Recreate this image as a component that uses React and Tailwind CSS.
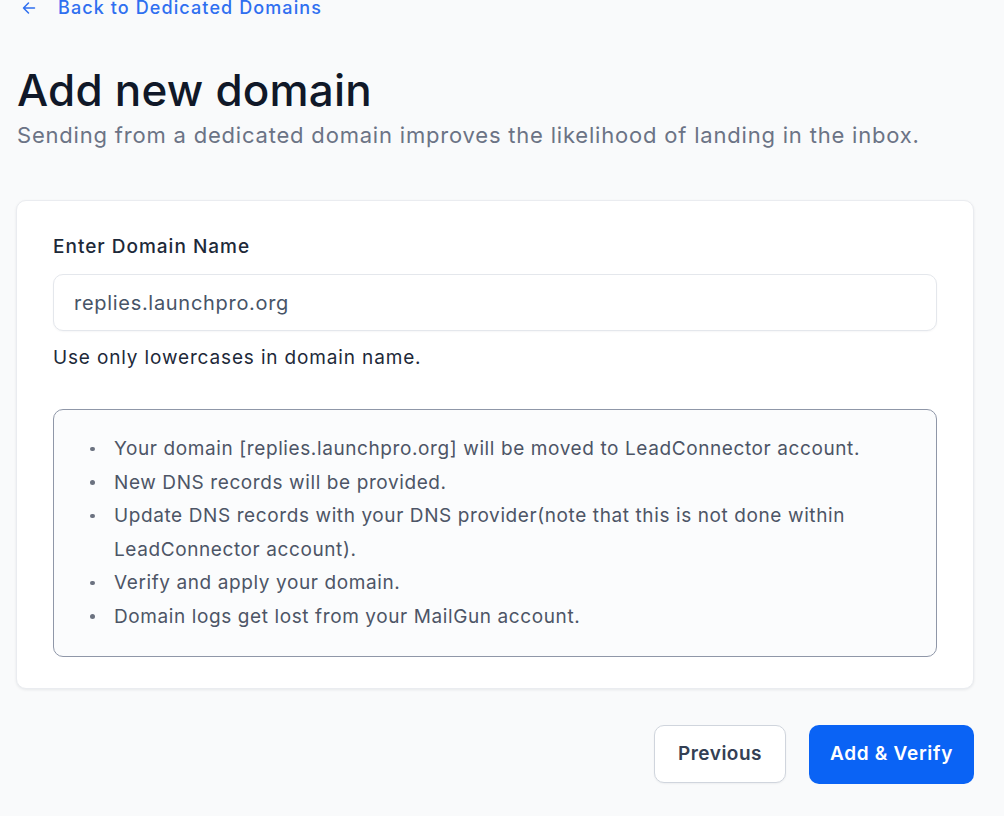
export default function App() {
  const notes = [
    ["Your domain [replies.launchpro.org] will be moved to LeadConnector account."],
    ["New DNS records will be provided."],
    ["Update DNS records with your DNS provider(note that this is not done within", "LeadConnector account)."],
    ["Verify and apply your domain."],
    ["Domain logs get lost from your MailGun account."],
  ];

  return (
    <div
      className="min-h-[816px] w-[1004px] bg-[#f9fafb] overflow-hidden"
      style={{ fontFamily: "Inter, 'Noto Sans', sans-serif" }}
    >
      <div className="pl-[17px] pr-[20px]">
        {/* back link */}
        <div className="-mt-[3px] flex items-center gap-[22px] pl-[5px] text-[18px] font-medium leading-[22px] tracking-[1.1px] text-[#2f6ff0]">
          <svg width="14" height="14" viewBox="0 0 14 14" fill="none" stroke="currentColor" strokeWidth="1.5" strokeLinecap="round" strokeLinejoin="round">
            <path d="M12.5 7H1.5M6.5 2L1.5 7l5 5" />
          </svg>
          <span>Back to Dedicated Domains</span>
        </div>

        <h1 className="mt-[45px] text-[44px] font-medium leading-[52px] tracking-[0.2px] text-[#101828]">
          Add new domain
        </h1>
        <p className="mt-[4px] text-[22px] leading-[30px] tracking-[0.8px] text-[#6b7385]">
          Sending from a dedicated domain improves the likelihood of landing in the inbox.
        </p>
      </div>

      {/* form card */}
      <div className="ml-[16px] mt-[50px] w-[958px] rounded-[10px] border border-[#eaecf0] bg-white px-[36px] pb-[31px] pt-[34px] shadow-[0_1px_3px_rgba(16,24,40,0.08)]">
        <label className="block text-[19px] font-medium leading-[24px] tracking-[1px] text-[#1d2939]">
          Enter Domain Name
        </label>
        <div className="mt-[15px] flex h-[57px] items-center rounded-[10px] border border-[#e4e7ec] bg-white px-[20px] text-[20px] tracking-[0.7px] text-[#475467] shadow-[0_1px_2px_rgba(16,24,40,0.04)]">
          replies.launchpro.org
        </div>
        <p className="mt-[15px] text-[19px] leading-[24px] tracking-[0.85px] text-[#1d2939]">
          Use only lowercases in domain name.
        </p>

        <div className="mt-[39px] rounded-[10px] border-[1.5px] border-[#8f97a8] bg-[#fbfcfd] pb-[23px] pl-[36px] pr-[40px] pt-[22px]">
          <ul className="text-[19px] leading-[33.5px] tracking-[0.6px] text-[#4d5566]">
            {notes.map((lines) => (
              <li key={lines[0]} className="flex">
                <span className="flex h-[33.5px] w-[24px] shrink-0 items-center">
                  <span className="block h-[4.5px] w-[4.5px] rounded-full bg-[#6b7280]" />
                </span>
                <span>
                  {lines.map((l) => (
                    <span key={l} className="block whitespace-nowrap">{l}</span>
                  ))}
                </span>
              </li>
            ))}
          </ul>
        </div>
      </div>

      {/* actions */}
      <div className="mt-[36px] flex w-[974px] justify-end gap-[23px]">
        <button className="h-[58px] w-[132px] rounded-[10px] border border-[#d0d5dd] bg-white text-[19px] font-semibold tracking-[0.5px] text-[#344054] shadow-[0_1px_2px_rgba(16,24,40,0.05)]">
          Previous
        </button>
        <button className="h-[59px] w-[165px] rounded-[10px] bg-[#0a63f5] text-[19px] font-semibold tracking-[0.7px] text-white">
          Add &amp; Verify
        </button>
      </div>
    </div>
  );
}
